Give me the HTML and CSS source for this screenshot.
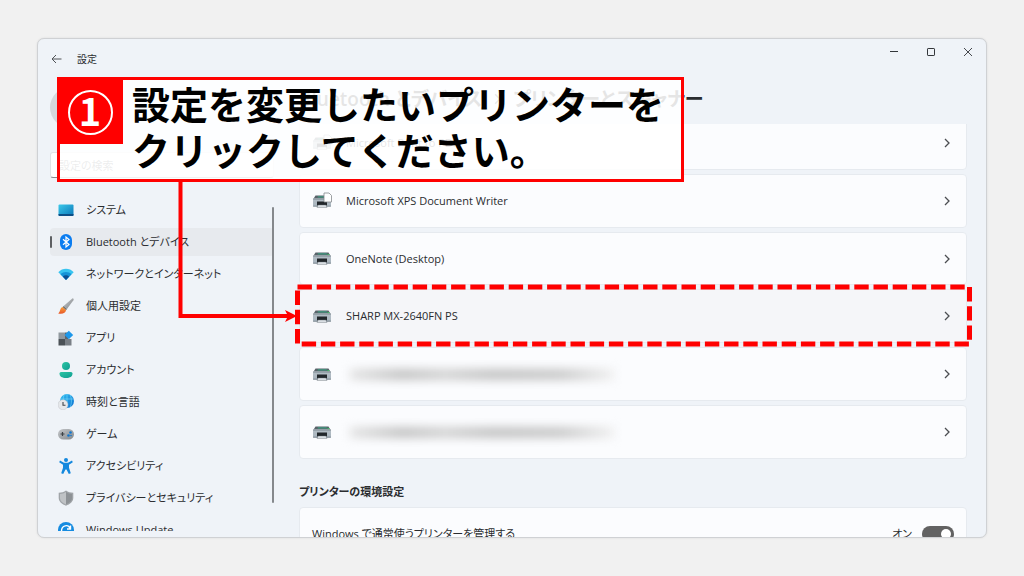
FILE: index.html
```html
<!DOCTYPE html>
<html lang="ja">
<head>
<meta charset="utf-8">
<meta name="viewport" content="width=device-width, initial-scale=1">
<title>設定</title>
<link rel="stylesheet" href="styles.css">
</head>
<body>
<svg width="0" height="0" class="defs" aria-hidden="true">
  <defs>
    <linearGradient id="gBody" x1="0" y1="0" x2="0" y2="1"><stop offset="0" stop-color="#b4bec6"/><stop offset="1" stop-color="#a9b5be"/></linearGradient>
    <linearGradient id="gSys" x1="0" y1="0" x2="1" y2="1"><stop offset="0" stop-color="#3cc9ea"/><stop offset="1" stop-color="#0a76b8"/></linearGradient>
    <linearGradient id="gTeal" x1="0" y1="0" x2="1" y2="1"><stop offset="0" stop-color="#2cc5a4"/><stop offset="1" stop-color="#0f9d91"/></linearGradient>
    <linearGradient id="gBlue" x1="0" y1="0" x2="1" y2="1"><stop offset="0" stop-color="#35c0f2"/><stop offset="1" stop-color="#0b6fd0"/></linearGradient>
    <linearGradient id="gGrey" x1="0" y1="0" x2="1" y2="1"><stop offset="0" stop-color="#c3c6c9"/><stop offset="1" stop-color="#85898d"/></linearGradient>
    <linearGradient id="gBrush" x1="0" y1="0" x2="0" y2="1"><stop offset="0" stop-color="#f9a13a"/><stop offset="1" stop-color="#e8582a"/></linearGradient>
    <symbol id="printer" viewBox="0 0 18 13">
      <path d="M2.500.5h13l1.800 3H.7z" fill="#59636a"/>
      <path d="M5 1.200h8.500l.8 1.300H4.500z" fill="#3f9a80"/>
      <path d="M14.500 2.800h1.800" stroke="#3be06a"/>
      <rect x="0" y="3.500" width="18" height="8" rx="1" fill="url(#gBody)"/>
      <path d="M0 3.500h18v1H0z" fill="#7b868e"/>
      <path d="M0 10.700h18v.9H0z" fill="#77838c"/>
      <path d="M4 6.500h10v4H4z" fill="#22272b"/>
      <path d="M5 10h8l1 2.300H4z" fill="#e9eef2" stroke="#59636b" stroke-width=".5"/>
    </symbol>
    <symbol id="chev" viewBox="0 0 6 10"><path d="M1 1l4 4-4 4" fill="none" stroke="#4b4e52" stroke-width="1.300"/></symbol>
  </defs>
</svg>

<div class="stage">
  <div class="window">
    <header class="titlebar">
      <button class="back" aria-label="戻る"><svg width="11" height="10" viewBox="0 0 11 10"><path d="M10.500 5H1M5 1L1 5l4 4" fill="none" stroke="#505357"/></svg></button>
      <span class="app">設定</span>
      <div class="controls">
        <button aria-label="最小化"><svg width="10" height="10" viewBox="0 0 10 10"><path d="M1 4.500h8" stroke="#33363a"/></svg></button>
        <button aria-label="最大化"><svg width="10" height="10" viewBox="0 0 10 10"><rect x="1.500" y="1.500" width="7" height="7" rx=".6" fill="none" stroke="#33363a"/></svg></button>
        <button aria-label="閉じる"><svg width="10" height="10" viewBox="0 0 10 10"><path d="M1 1l8 8M9 1L1 9" stroke="#33363a" stroke-width=".9"/></svg></button>
      </div>
    </header>

    <div class="body">
      <aside class="side">
        <div class="profile"><span class="avatar"></span></div>
        <input class="search" type="search" placeholder="設定の検索" aria-label="設定の検索">
        <nav class="nav">
          <a href="#"><svg viewBox="0 0 16 16"><rect x=".5" y="2.500" width="15" height="11.500" rx="1" fill="url(#gSys)"/><path d="M.5 12h15v1a1 1 0 0 1-1 1h-13a1 1 0 0 1-1-1z" fill="#0d4f86"/></svg>システム</a>
          <a href="#" class="on"><svg viewBox="0 0 16 16"><rect x="2" y="0" width="12" height="16" rx="6" fill="#0b7df0"/><path d="M5 5.300l6 5.200-3 2.500V3l3 2.500-6 5.200" fill="none" stroke="#fff" stroke-width="1.200"/></svg>Bluetooth とデバイス</a>
          <a href="#"><svg viewBox="0 0 16 16"><path d="M.3 6.200C4.500 1.700 11.500 1.700 15.700 6.200L8 14z" fill="#38c4f0"/><path d="M2.500 8.300c3-3 8-3 11 0L8 14z" fill="#1593d6"/><path d="M4.800 10.600c1.800-1.800 4.600-1.800 6.400 0L8 14z" fill="#0b4f93"/></svg>ネットワークとインターネット</a>
          <a href="#"><svg viewBox="0 0 16 16"><path d="M14.600.3c1 .1 1.400 1 .8 2L9 11 5.600 8z" fill="url(#gGrey)"/><path d="M5.600 8L9 11l-1 1.200-3.500-3z" fill="#6d7175"/><path d="M4.500 9l3.600 3c-.2 3.200-4 4.300-7.900 3.400 2.200-1 1.400-5.500 4.300-6.400z" fill="url(#gBrush)"/></svg>個人用設定</a>
          <a href="#"><svg viewBox="0 0 16 16"><path d="M.5 2.500H7V9H.5z" fill="#90989f"/><path d="M.5 9H7v6.500H.5z" fill="#4b5157"/><path d="M7 9h6.500v6.500H7z" fill="#797f86"/><path d="M7 2.500h3V9H7z" fill="#5d646b"/><path d="M10.800.7l4.400 4.300-4.400 4.300L6.500 5z" fill="#1d97ea"/></svg>アプリ</a>
          <a href="#"><svg viewBox="0 0 16 16"><circle cx="8" cy="4" r="4" fill="url(#gTeal)"/><path d="M1.500 11.500q0-1.500 1.500-1.500h10q1.500 0 1.500 1.500c0 3-2.500 4.500-6.500 4.500s-6.500-1.500-6.500-4.500z" fill="url(#gTeal)"/></svg>アカウント</a>
          <a href="#"><svg viewBox="0 0 16 16"><circle cx="9" cy="7" r="7" fill="url(#gBlue)"/><path d="M3 5h12M9 0v8M6 1c-1 3-1 5 0 7M12.300 1c1.500 4 1.500 8 0 12" fill="none" stroke="#79dcf8" stroke-width=".6"/><circle cx="5" cy="10.800" r="5" fill="#e5e7ea" stroke="#b7bbc0" stroke-width=".4"/><path d="M5 8v3.200h2.500" fill="none" stroke="#42464a" stroke-width="1.100"/></svg>時刻と言語</a>
          <a href="#"><svg viewBox="0 0 16 16"><rect x="0" y="3" width="16" height="10.500" rx="5.200" fill="url(#gGrey)"/><path d="M2.500 8h4M4.500 6v4" stroke="#3d4246" stroke-width="1.200"/><circle cx="12.500" cy="6.500" r="1.300" fill="#1177cf"/><circle cx="10.500" cy="9.500" r="1.300" fill="#1177cf"/><circle cx="13" cy="9.500" r=".8" fill="#1177cf"/></svg>ゲーム</a>
          <a href="#"><svg viewBox="0 0 16 16"><circle cx="8" cy="2" r="2" fill="#1488de"/><path d="M2 2.500l4 2.300h4l4-2.300.8 1.700-3.800 2.600v3l1.800 5.500-2 .7L8.500 11.500h-1L5.200 16l-2-.7L5 9.800v-3L1.200 4.200z" fill="#1488de"/></svg>アクセシビリティ</a>
          <a href="#"><svg viewBox="0 0 16 16"><path d="M8 .6c2 1.500 4.500 2.200 7.300 2.200v5c0 4-3.300 6.400-7.300 8C4 14.200.7 11.800.7 7.800v-5C3.500 2.800 6 2.100 8 .6z" fill="#a0a4a8"/><path d="M8 2c1.800 1.200 3.800 1.900 6 2v4c0 3-2.600 5-6 6.400z" fill="#8d9195"/><path d="M8 2C6.200 3.200 4.200 3.900 2 4v4c0 3 2.600 5 6 6.400z" fill="#bfc2c5"/></svg>プライバシーとセキュリティ</a>
          <a href="#"><svg viewBox="0 0 16 16"><circle cx="8" cy="8" r="8" fill="#158be0"/><path d="M3.500 9C3.500 3 10.500 2 12 6.500M12.500 3.500V7H9" fill="none" stroke="#fff" stroke-width="1.400"/></svg>Windows Update</a>
        </nav>
        <div class="thumb"></div>
      </aside>

      <main class="main">
        <h1><span>Bluetooth とデバイス</span><svg width="7" height="12" viewBox="0 0 6 10"><use href="#chev"/></svg><span>プリンターとスキャナー</span></h1>
        <div class="scroller">
          <div class="list">
            <button class="row"><svg class="pr" viewBox="0 0 19 17"><use href="#printer" x="0" y="3" width="18" height="13"/><path d="M11 1h5l2.500 2.500V10H11z" fill="#fff" stroke="#84898d" stroke-width=".8"/></svg><span>Microsoft Print to PDF</span><svg class="ch"><use href="#chev"/></svg></button>
            <button class="row"><svg class="pr" viewBox="0 0 19 17"><use href="#printer" x="0" y="3" width="18" height="13"/><path d="M11 1h5l2.500 2.500V10H11z" fill="#fff" stroke="#84898d" stroke-width=".8"/></svg><span>Microsoft XPS Document Writer</span><svg class="ch"><use href="#chev"/></svg></button>
            <button class="row"><svg class="pr" viewBox="0 0 19 17"><use href="#printer" x="0" y="2" width="18" height="13"/></svg><span>OneNote (Desktop)</span><svg class="ch"><use href="#chev"/></svg></button>
            <button class="row hover"><svg class="pr" viewBox="0 0 19 17"><use href="#printer" x="0" y="2" width="18" height="13"/></svg><span>SHARP MX-2640FN PS</span><svg class="ch"><use href="#chev"/></svg></button>
            <button class="row" aria-label="プリンター"><svg class="pr" viewBox="0 0 19 17"><use href="#printer" x="0" y="2" width="18" height="13"/></svg><span class="hidden-name"></span><svg class="ch"><use href="#chev"/></svg></button>
            <button class="row" aria-label="プリンター"><svg class="pr" viewBox="0 0 19 17"><use href="#printer" x="0" y="2" width="18" height="13"/></svg><span class="hidden-name"></span><svg class="ch"><use href="#chev"/></svg></button>
          </div>
          <h2>プリンターの環境設定</h2>
          <div class="pref">
            <label for="manage">Windows で通常使うプリンターを管理する</label>
            <span class="state">オン</span>
            <input id="manage" class="toggle" type="checkbox" role="switch" checked>
          </div>
        </div>
      </main>
    </div>
  </div>

  <svg class="marks" width="1024" height="576" viewBox="0 0 1024 576" aria-hidden="true">
    <path d="M180.500 180V316H289" fill="none" stroke="#f00" stroke-width="4"/>
    <path d="M297 316L285 310l3 6-3 6z" fill="#f00"/>
    <path d="M297.500 287H969.500V344H297.500Z" fill="none" stroke="#f00" stroke-width="5" stroke-dasharray="14.400 4.800"/>
  </svg>
  <div class="callout">
    <div class="step"><span>1</span></div>
    <p>設定を変更したいプリンターを<br>クリックしてください。</p>
  </div>
</div>
</body>
</html>
```

FILE: styles.css
```css
* { box-sizing: border-box; }

body {
  margin: 0;
  background: #f1f1f1;
  color: #2a2c2f;
  font: 11px/16px "Open Sans", "Noto Sans CJK JP", sans-serif;
  font-feature-settings: "palt";
}

button {
  padding: 0;
  border: 0;
  background: none;
  color: inherit;
  font: inherit;
  font-feature-settings: inherit;
}

.defs { position: absolute; }

.stage {
  position: relative;
  height: 100vh;
  padding: 38px 37px;
  overflow: hidden;
}

.window {
  display: flex;
  flex-direction: column;
  height: 100%;
  border: 1px solid #cfd1d4;
  border-radius: 7px;
  background: #eff3f8;
  box-shadow: 0 0 2px #d8d8d8;
  overflow: hidden;
}

.titlebar {
  display: flex;
  align-items: center;
  height: 40px;
  padding: 0 13px;
}

.back { display: flex; }
.app { margin-left: 15px; font-size: 10px; }

.controls {
  display: flex;
  gap: 27px;
  margin: 0 0 14px auto;
}
.controls button { display: flex; }

.body {
  display: flex;
  flex: 1;
  gap: 25px;
  min-height: 0;
  padding: 0 19px 0 12px;
}

.side {
  position: relative;
  display: flex;
  flex-direction: column;
  width: 224px;
  padding-bottom: 6px;
}

.profile { height: 73px; padding-top: 8px; }
.avatar {
  display: block;
  width: 41px;
  height: 41px;
  border-radius: 50%;
  background: #d5d8dc;
}

.search {
  height: 26px;
  padding: 0 8px;
  border: 1px solid #e0e3e7;
  border-bottom-color: #85888c;
  border-radius: 3px;
  background: #fff;
  font: inherit;
}
.search::placeholder { color: #6a6d70; opacity: 1; }

.nav {
  display: flex;
  flex-direction: column;
  gap: 4px;
  flex: 1;
  min-height: 0;
  margin-top: 18px;
  overflow: hidden;
}
.nav a {
  position: relative;
  display: flex;
  flex: none;
  align-items: center;
  gap: 12px;
  height: 28px;
  padding-left: 8px;
  border-radius: 4px;
  color: inherit;
  text-decoration: none;
}
.nav svg { width: 16px; height: 16px; }
.nav .on { background: #e7eaee; }
.nav .on::before {
  content: "";
  position: absolute;
  left: 0;
  top: 8px;
  width: 2px;
  height: 12px;
  border-radius: 1px;
  background: #5d5f62;
}

.thumb {
  position: absolute;
  top: 128px;
  right: 0;
  bottom: 34px;
  width: 2px;
  border-radius: 1px;
  background: #85888c;
}

.main {
  display: flex;
  flex: 1;
  flex-direction: column;
  min-width: 0;
}

h1 {
  display: flex;
  align-items: center;
  gap: 12px;
  height: 40px;
  margin: 0 0 5px;
  font-size: 19px;
  font-weight: 600;
  white-space: nowrap;
}

.scroller { flex: 1; min-height: 0; overflow: hidden; }

.list {
  display: grid;
  grid-auto-rows: 1fr;
  gap: 4px;
  min-height: 343px;
  margin-top: -8px;
}

.row {
  display: flex;
  align-items: center;
  width: 100%;
  padding: 0 16px 0 13px;
  border: 1px solid #e6eaef;
  border-radius: 4px;
  background: #fbfcfe;
  text-align: left;
}
.row.hover { background: #f5f6f9; }
.pr { width: 19px; height: 17px; margin-right: 14px; }
.ch { width: 6px; height: 10px; margin-left: auto; }

.hidden-name {
  width: 264px;
  height: 11px;
  margin-left: 4px;
  background: linear-gradient(90deg, #e4e4e4, #c2c2c2 20%, #d2d2d2 36%, #c2c2c2 55%, #c8c8c8 80%, #f0f0f0);
  filter: blur(5px);
}

h2 {
  margin: 25px 0 7px;
  font-size: 11px;
  font-weight: 600;
}

.pref {
  display: flex;
  align-items: center;
  height: 54px;
  padding: 0 12px;
  border: 1px solid #e6eaef;
  border-radius: 4px;
  background: #fbfcfe;
}
.state { margin-left: auto; }

.toggle {
  display: flex;
  align-items: center;
  justify-content: flex-end;
  width: 32px;
  height: 16px;
  margin: 0 0 0 10px;
  padding: 0 3px;
  border-radius: 8px;
  background: #626262;
  appearance: none;
}
.toggle::before {
  content: "";
  width: 10px;
  height: 10px;
  border-radius: 50%;
  background: #fff;
}

.marks {
  position: absolute;
  top: 0;
  left: 0;
  pointer-events: none;
}

.callout {
  position: absolute;
  top: 77px;
  left: 57px;
  display: flex;
  gap: 9px;
  width: 627px;
  height: 105px;
  border: 3px solid #f00;
  background: rgba(255, 255, 255, 0.88);
}
.callout p {
  margin: 0;
  color: #000;
  font: 700 38px/46px "Noto Sans CJK JP", sans-serif;
  font-feature-settings: normal;
  white-space: nowrap;
}

.step {
  display: flex;
  align-items: center;
  justify-content: center;
  width: 63px;
  height: 64px;
  padding-right: 3px;
  background: #f00;
}
.step span {
  width: 45px;
  height: 45px;
  border: 2px solid #fff;
  border-radius: 50%;
  color: #fff;
  font: 700 38px/36px "Noto Sans CJK JP", sans-serif;
  text-align: center;
}
```
